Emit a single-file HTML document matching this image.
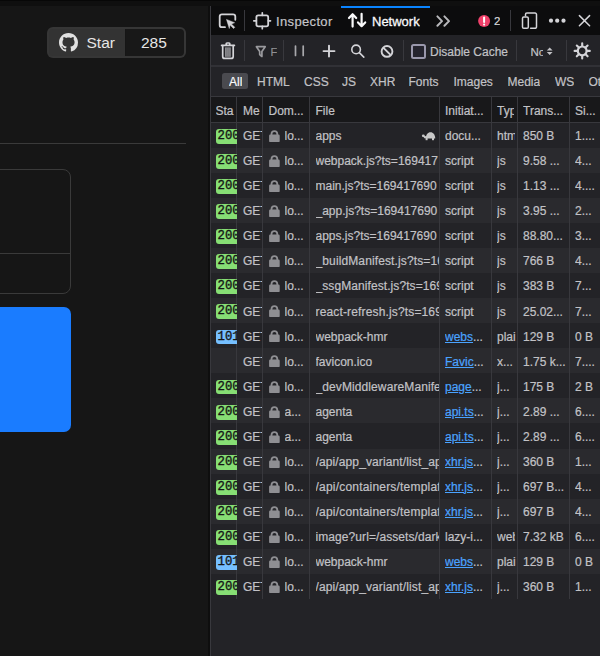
<!DOCTYPE html>
<html><head><meta charset="utf-8">
<style>
*{box-sizing:border-box}
html,body{margin:0;padding:0}
body{width:600px;height:656px;background:#161616;position:relative;overflow:hidden;font-family:"Liberation Sans",sans-serif;color:#c2c2c6}
.a{position:absolute}
svg{position:absolute;overflow:visible}
.sep{position:absolute;width:1px;background:#38383d}
.t{position:absolute;white-space:nowrap;overflow:hidden;font-size:12px;line-height:25px;color:#c2c2c6;-webkit-text-stroke:0.2px currentColor}
.lnk{color:#4aa3ff;text-decoration:underline;text-decoration-thickness:1.2px}
.el{letter-spacing:-0.1px}
.badge{position:absolute;border-radius:3px 0 0 3px;font-family:"Liberation Mono",monospace;font-size:12.3px;color:#151515;padding-left:1.6px;-webkit-text-stroke:0.35px #151515;overflow:hidden;white-space:nowrap}
</style></head><body>

<div class="a" style="left:46.8px;top:26.8px;width:139px;height:31.6px;border-radius:6px;background:#363636;"></div>
<div class="a" style="left:48.8px;top:28.8px;width:76.2px;height:27.6px;border-radius:4px 0 0 4px;background:#333333;"></div>
<div class="a" style="left:125px;top:28.8px;width:1px;height:27.6px;background:#161616;"></div>
<div class="a" style="left:126px;top:28.8px;width:57.8px;height:27.6px;border-radius:0 4px 4px 0;background:#181818;"></div>
<div class="a" style="left:86.5px;top:28px;font-size:15.5px;line-height:29px;color:#e6e6e6">Star</div>
<div class="a" style="left:141px;top:28px;font-size:15.5px;line-height:29px;color:#e6e6e6">285</div>
<svg style="left:59.2px;top:33.2px" width="19" height="19" viewBox="0 0 16 16"><path fill="#e0e0e0" d="M8 0C3.58 0 0 3.58 0 8c0 3.54 2.29 6.53 5.47 7.59.4.07.55-.17.55-.38 0-.19-.01-.82-.01-1.49-2.01.37-2.53-.49-2.69-.94-.09-.23-.48-.94-.82-1.13-.28-.15-.68-.52-.01-.53.63-.01 1.08.58 1.230.82.72 1.21 1.87.87 2.33.66.07-.52.28-.87.51-1.07-1.78-.2-3.64-.89-3.64-3.95 0-.87.31-1.59.82-2.15-.08-.2-.36-1.02.08-2.12 0 0 .67-.21 2.2.82.64-.18 1.32-.27 2-.27.68 0 1.36.09 2 .27 1.53-1.04 2.2-.82 2.2-.82.44 1.1.16 1.92.08 2.12.51.56.82 1.27.82 2.15 0 3.07-1.87 3.75-3.65 3.95.29.25.54.73.54 1.48 0 1.07-.01 1.93-.01 2.2 0 .21.15.46.55.38A8.013 8.013 0 0016 8c0-4.42-3.58-8-8-8z"/></svg>
<div class="a" style="left:0;top:143px;width:186px;height:1px;background:#3a3a3a"></div>
<div class="a" style="left:-10px;top:169px;width:81px;height:125px;border:1px solid #3a3a3a;border-radius:8px"></div>
<div class="a" style="left:0;top:253px;width:70px;height:1px;background:#3a3a3a"></div>
<div class="a" style="left:-10px;top:306.5px;width:81px;height:125.5px;background:#1a7cff;border-radius:7px"></div>

<div class="a" style="left:208px;top:0;width:2px;height:656px;background:#0e0e0e"></div>
<div class="a" style="left:210px;top:0;width:1px;height:656px;background:#38383d"></div>
<div class="a" style="left:211px;top:0;width:389px;height:656px;background:#232327"></div>
<!-- tab bar -->
<div class="a" style="left:211px;top:0;width:389px;height:35px;background:#0c0c0d"></div>
<div class="a" style="left:0;top:0;width:600px;height:5.5px;background:#0f0f0f"></div>
<div class="a" style="left:0;top:0;width:600px;height:1px;background:#070707"></div>
<div class="a" style="left:340.5px;top:6px;width:89px;height:2px;background:#0a84ff"></div>
<div class="sep" style="left:244px;top:10px;height:21px"></div>
<div class="sep" style="left:510px;top:10px;height:21px"></div>
<div class="t" style="left:276px;top:9px;font-size:13px;color:#c4c4c8;letter-spacing:0.35px">Inspector</div>
<div class="t" style="left:372px;top:9px;font-size:13px;color:#f9f9fa;-webkit-text-stroke:0.3px #f9f9fa">Network</div>
<div class="t" style="left:494px;top:9px;font-size:11.5px;color:#d7d7db">2</div>
<svg style="left:0;top:0" width="600" height="66" viewBox="0 0 600 66">
 <g fill="none" stroke="#d4d4d8" stroke-width="1.6" stroke-linecap="round" stroke-linejoin="round">
  <path stroke-width="1.8" d="M235.3 19.8V16.6a2.3 2.3 0 0 0-2.3-2.3H222a2.3 2.3 0 0 0-2.3 2.3V24.9a2.3 2.3 0 0 0 2.3 2.3H225"/>
  <rect stroke-width="1.8" x="256.4" y="15.4" width="11.8" height="10.9" rx="1.8"/>
  <path stroke-width="1.7" d="M262.3 12.8V15.3M262.3 26.3V28.7M253.8 20.8H256.3M268.3 20.8H270.5"/>
 </g>
 <path fill="#d4d4d8" stroke="#d4d4d8" stroke-width="0.5" stroke-linejoin="round" d="M226.5 19.4L234.6 22.7L231.4 23.9L234.8 27.3L233.5 28.5L230.1 25.1L229.3 28.5Z"/>
 <g fill="none" stroke="#f9f9fa" stroke-width="2.2" stroke-linecap="round" stroke-linejoin="round">
  <path d="M352.6 26.6V14.4M349 18L352.6 14.2L356.2 18"/>
  <path d="M361.6 13.8V26M358 22.4L361.6 26.2L365.2 22.4"/>
 </g>
 <g fill="none" stroke="#b8b8bb" stroke-width="2" stroke-linecap="round" stroke-linejoin="round">
  <path d="M437.4 16.4L442 21.1L437.4 25.8M444.4 16.4L449 21.1L444.4 25.8"/>
 </g>
 <circle cx="484.1" cy="21.1" r="6" fill="#f0406a"/>
 <path d="M484.1 17.5V22" stroke="#fff" stroke-width="2" stroke-linecap="round"/>
 <circle cx="484.1" cy="24.6" r="1.05" fill="#fff"/>
 <g fill="none" stroke="#d4d4d8" stroke-width="1.5" stroke-linecap="round" stroke-linejoin="round">
  <rect x="522.5" y="17" width="5.8" height="11.3" rx="1.3"/>
  <path d="M525.5 15.8V14.4a1.4 1.4 0 0 1 1.4-1.4H535.1a1.4 1.4 0 0 1 1.4 1.4V26.9a1.4 1.4 0 0 1-1.4 1.4H530.6"/>
  <path d="M579.4 15.6L589.6 25.8M589.6 15.6L579.4 25.8"/>
 </g>
 <circle cx="551" cy="20.7" r="2.1" fill="#d4d4d8"/>
 <circle cx="557.2" cy="20.7" r="2.1" fill="#d4d4d8"/>
 <circle cx="563.5" cy="20.7" r="2.1" fill="#d4d4d8"/>
</svg>

<!-- toolbar 2 -->
<div class="a" style="left:211px;top:35px;width:389px;height:31px;background:#232327"></div>
<div class="a" style="left:211px;top:65px;width:389px;height:2px;background:#313136"></div>
<div class="sep" style="left:244px;top:40px;height:21px"></div>
<div class="sep" style="left:283px;top:40px;height:21px"></div>
<div class="sep" style="left:403px;top:40px;height:21px"></div>
<div class="sep" style="left:515.5px;top:40px;height:21px"></div>
<div class="sep" style="left:566px;top:40px;height:21px"></div>
<div class="t" style="left:270.5px;top:39.5px;font-size:11px;color:#8f8f93">F</div>
<div class="a" style="left:411px;top:44px;width:15px;height:15px;border:2px solid #9a98ac;border-radius:2.5px;background:#25242e"></div>
<div class="t" style="left:430px;top:40px;font-size:12px;color:#c2c2c6">Disable Cache</div>
<div class="t" style="left:530.5px;top:40px;font-size:11.5px;color:#c2c2c6;width:12.5px">No</div>
<svg style="left:0;top:0" width="600" height="66" viewBox="0 0 600 66">
 <g fill="none" stroke="#d4d4d8" stroke-width="1.7" stroke-linecap="round" stroke-linejoin="round">
  <path d="M221.6 45.4H234.4M226.2 45.2V43.8a0.8 0.8 0 0 1 .8-.8H229a0.8 0.8 0 0 1 .8.8V45.2"/>
  <path d="M222.7 45.6V56.4a2 2 0 0 0 2 2H231.2a2 2 0 0 0 2-2V45.6"/>
 </g>
 <rect x="225" y="47.4" width="5.8" height="9.4" fill="#8a8a8e"/>
 <path d="M226.9 47.6V56.6M228.9 47.6V56.6" stroke="#6a6a6e" stroke-width="0.7"/>
 <path fill="none" stroke="#9a9a9e" stroke-width="1.7" stroke-linejoin="round" d="M256.4 46.7H265.2L261.9 51.4V56.5L259.7 54.6V51.4Z"/>
 <path d="M295.5 46V55.4M303.2 46V55.4" stroke="#a8a8ac" stroke-width="1.7" stroke-linecap="round"/>
 <g fill="none" stroke="#d4d4d8" stroke-width="1.9" stroke-linecap="round">
  <path d="M329 45.6V56.6M323.5 51.1H334.5"/>
 </g>
 <g fill="none" stroke="#d4d4d8" stroke-width="1.6" stroke-linecap="round">
  <circle cx="356.1" cy="49.4" r="4.3"/>
  <path d="M359.3 52.6L363.8 57.1"/>
 </g>
 <g fill="none" stroke="#d4d4d8" stroke-width="1.9">
  <circle cx="387" cy="51.4" r="5.4"/>
  <path d="M383.2 47.6L390.8 55.2"/>
 </g>
 <path fill="#c2c2c6" d="M546.8 50.6L549.7 47.5L552.6 50.6ZM546.8 52L549.7 55.1L552.6 52Z"/>
 <g transform="translate(582.2 50.9)">
  <circle r="4.4" fill="none" stroke="#d4d4d8" stroke-width="2.2"/>
  <g stroke="#d4d4d8" stroke-width="2.1" stroke-linecap="round">
   <path d="M0 -5V-7.6M0 5V7.6M-5 0H-7.6M5 0H7.6M3.6 3.6L5.4 5.4M-3.6 -3.6L-5.4 -5.4M3.6 -3.6L5.4 -5.4M-3.6 3.6L-5.4 5.4"/>
  </g>
 </g>
</svg>

<!-- filter row -->
<div class="a" style="left:211px;top:96px;width:389px;height:1px;background:#38383d"></div>
<div class="a" style="left:222.3px;top:73.3px;width:25.7px;height:16px;border-radius:2.5px;background:#4a4a4f"></div>
<div class="t" style="left:229px;top:70px;color:#f9f9fa">All</div>
<div class="t" style="left:257px;top:70px">HTML</div>
<div class="t" style="left:304px;top:70px">CSS</div>
<div class="t" style="left:342px;top:70px">JS</div>
<div class="t" style="left:370px;top:70px">XHR</div>
<div class="t" style="left:408.5px;top:70px">Fonts</div>
<div class="t" style="left:453.5px;top:70px">Images</div>
<div class="t" style="left:507.5px;top:70px">Media</div>
<div class="t" style="left:555px;top:70px">WS</div>
<div class="t" style="left:588.5px;top:70px">Other</div>

<!-- header -->
<div class="a" style="left:211px;top:97px;width:389px;height:25px;background:#18181a"></div>
<div class="a" style="left:211px;top:122px;width:389px;height:1px;background:#38383d"></div>
<div class="a" style="left:211px;top:122.50px;width:389px;height:25.08px;background:#232327"></div>
<div class="a" style="left:211px;top:147.58px;width:389px;height:25.08px;background:#2a2a2e"></div>
<div class="a" style="left:211px;top:172.66px;width:389px;height:25.08px;background:#232327"></div>
<div class="a" style="left:211px;top:197.74px;width:389px;height:25.08px;background:#2a2a2e"></div>
<div class="a" style="left:211px;top:222.82px;width:389px;height:25.08px;background:#232327"></div>
<div class="a" style="left:211px;top:247.90px;width:389px;height:25.08px;background:#2a2a2e"></div>
<div class="a" style="left:211px;top:272.98px;width:389px;height:25.08px;background:#232327"></div>
<div class="a" style="left:211px;top:298.06px;width:389px;height:25.08px;background:#2a2a2e"></div>
<div class="a" style="left:211px;top:323.14px;width:389px;height:25.08px;background:#232327"></div>
<div class="a" style="left:211px;top:348.22px;width:389px;height:25.08px;background:#2a2a2e"></div>
<div class="a" style="left:211px;top:373.30px;width:389px;height:25.08px;background:#232327"></div>
<div class="a" style="left:211px;top:398.38px;width:389px;height:25.08px;background:#2a2a2e"></div>
<div class="a" style="left:211px;top:423.46px;width:389px;height:25.08px;background:#232327"></div>
<div class="a" style="left:211px;top:448.54px;width:389px;height:25.08px;background:#2a2a2e"></div>
<div class="a" style="left:211px;top:473.62px;width:389px;height:25.08px;background:#232327"></div>
<div class="a" style="left:211px;top:498.70px;width:389px;height:25.08px;background:#2a2a2e"></div>
<div class="a" style="left:211px;top:523.78px;width:389px;height:25.08px;background:#232327"></div>
<div class="a" style="left:211px;top:548.86px;width:389px;height:25.08px;background:#2a2a2e"></div>
<div class="a" style="left:211px;top:573.94px;width:389px;height:25.08px;background:#232327"></div>
<div class="sep" style="left:236.0px;top:97px;height:502.0px"></div>
<div class="sep" style="left:262.0px;top:97px;height:502.0px"></div>
<div class="sep" style="left:309.0px;top:97px;height:502.0px"></div>
<div class="sep" style="left:439.0px;top:97px;height:502.0px"></div>
<div class="sep" style="left:490.5px;top:97px;height:502.0px"></div>
<div class="sep" style="left:516.8px;top:97px;height:502.0px"></div>
<div class="sep" style="left:569.0px;top:97px;height:502.0px"></div>
<div class="badge" style="left:216px;top:128.90px;width:20.5px;height:14.8px;line-height:14.8px;background:#86de74">200</div>
<div class="t" style="left:243px;top:124.00px;width:19px">GET</div>
<svg style="left:268.7px;top:129.70px" width="11" height="13" viewBox="0 0 11 13"><path fill="#8f8f93" d="M1.3 12.1a1.2 1.2 0 0 1-1.2-1.2V5.8a1.2 1.2 0 0 1 1.2-1.2h.3V4.1a3.8 3.8 0 0 1 7.6 0v.5h.3a1.2 1.2 0 0 1 1.2 1.2v5.1a1.2 1.2 0 0 1-1.2 1.2zM3.4 4.6h4V4.1a2 2 0 0 0-4 0z"/></svg>
<div class="t" style="left:284.5px;top:124.00px;width:24px">lo<span class="el">...</span></div>
<div class="t" style="left:315.5px;top:124.00px;width:123.5px;letter-spacing:0px">apps</div>
<svg style="left:420px;top:132.00px" width="18" height="12" viewBox="0 0 18 12"><g fill="#c8c8c8"><path d="M5.8 6.4C5.8 2.6 7.8 0.2 10.5 0.2S15.2 2.6 15.2 6.4Z"/><circle cx="3.3" cy="3.8" r="1.4"/><path d="M3.2 3.2L6.5 4.6V6.3H4.2Z"/><rect x="5.6" y="5.8" width="2" height="2.4"/><rect x="12" y="5.8" width="2" height="2.4"/></g></svg>
<div class="t" style="left:445px;top:124.00px;width:45px">docu<span class="el">...</span></div>
<div class="t" style="left:497px;top:124.00px;width:18px">htm</div>
<div class="t" style="left:523px;top:124.00px;width:46px">850 B</div>
<div class="t" style="left:575px;top:124.00px;width:25px">1.<span class="el">...</span></div>
<div class="badge" style="left:216px;top:153.98px;width:20.5px;height:14.8px;line-height:14.8px;background:#86de74">200</div>
<div class="t" style="left:243px;top:149.08px;width:19px">GET</div>
<svg style="left:268.7px;top:154.78px" width="11" height="13" viewBox="0 0 11 13"><path fill="#8f8f93" d="M1.3 12.1a1.2 1.2 0 0 1-1.2-1.2V5.8a1.2 1.2 0 0 1 1.2-1.2h.3V4.1a3.8 3.8 0 0 1 7.6 0v.5h.3a1.2 1.2 0 0 1 1.2 1.2v5.1a1.2 1.2 0 0 1-1.2 1.2zM3.4 4.6h4V4.1a2 2 0 0 0-4 0z"/></svg>
<div class="t" style="left:284.5px;top:149.08px;width:24px">lo<span class="el">...</span></div>
<div class="t" style="left:315.5px;top:149.08px;width:123.5px;letter-spacing:0px">webpack.js?ts=169417</div>
<div class="t" style="left:445px;top:149.08px;width:45px">script</div>
<div class="t" style="left:497px;top:149.08px;width:19px">js</div>
<div class="t" style="left:523px;top:149.08px;width:46px">9.58 <span class="el">...</span></div>
<div class="t" style="left:575px;top:149.08px;width:25px">4<span class="el">...</span></div>
<div class="badge" style="left:216px;top:179.06px;width:20.5px;height:14.8px;line-height:14.8px;background:#86de74">200</div>
<div class="t" style="left:243px;top:174.16px;width:19px">GET</div>
<svg style="left:268.7px;top:179.86px" width="11" height="13" viewBox="0 0 11 13"><path fill="#8f8f93" d="M1.3 12.1a1.2 1.2 0 0 1-1.2-1.2V5.8a1.2 1.2 0 0 1 1.2-1.2h.3V4.1a3.8 3.8 0 0 1 7.6 0v.5h.3a1.2 1.2 0 0 1 1.2 1.2v5.1a1.2 1.2 0 0 1-1.2 1.2zM3.4 4.6h4V4.1a2 2 0 0 0-4 0z"/></svg>
<div class="t" style="left:284.5px;top:174.16px;width:24px">lo<span class="el">...</span></div>
<div class="t" style="left:315.5px;top:174.16px;width:123.5px;letter-spacing:0px">main.js?ts=169417690</div>
<div class="t" style="left:445px;top:174.16px;width:45px">script</div>
<div class="t" style="left:497px;top:174.16px;width:19px">js</div>
<div class="t" style="left:523px;top:174.16px;width:46px">1.13 <span class="el">...</span></div>
<div class="t" style="left:575px;top:174.16px;width:25px">4.<span class="el">...</span></div>
<div class="badge" style="left:216px;top:204.14px;width:20.5px;height:14.8px;line-height:14.8px;background:#86de74">200</div>
<div class="t" style="left:243px;top:199.24px;width:19px">GET</div>
<svg style="left:268.7px;top:204.94px" width="11" height="13" viewBox="0 0 11 13"><path fill="#8f8f93" d="M1.3 12.1a1.2 1.2 0 0 1-1.2-1.2V5.8a1.2 1.2 0 0 1 1.2-1.2h.3V4.1a3.8 3.8 0 0 1 7.6 0v.5h.3a1.2 1.2 0 0 1 1.2 1.2v5.1a1.2 1.2 0 0 1-1.2 1.2zM3.4 4.6h4V4.1a2 2 0 0 0-4 0z"/></svg>
<div class="t" style="left:284.5px;top:199.24px;width:24px">lo<span class="el">...</span></div>
<div class="t" style="left:315.5px;top:199.24px;width:123.5px;letter-spacing:0px">_app.js?ts=169417690</div>
<div class="t" style="left:445px;top:199.24px;width:45px">script</div>
<div class="t" style="left:497px;top:199.24px;width:19px">js</div>
<div class="t" style="left:523px;top:199.24px;width:46px">3.95 <span class="el">...</span></div>
<div class="t" style="left:575px;top:199.24px;width:25px">2<span class="el">...</span></div>
<div class="badge" style="left:216px;top:229.22px;width:20.5px;height:14.8px;line-height:14.8px;background:#86de74">200</div>
<div class="t" style="left:243px;top:224.32px;width:19px">GET</div>
<svg style="left:268.7px;top:230.02px" width="11" height="13" viewBox="0 0 11 13"><path fill="#8f8f93" d="M1.3 12.1a1.2 1.2 0 0 1-1.2-1.2V5.8a1.2 1.2 0 0 1 1.2-1.2h.3V4.1a3.8 3.8 0 0 1 7.6 0v.5h.3a1.2 1.2 0 0 1 1.2 1.2v5.1a1.2 1.2 0 0 1-1.2 1.2zM3.4 4.6h4V4.1a2 2 0 0 0-4 0z"/></svg>
<div class="t" style="left:284.5px;top:224.32px;width:24px">lo<span class="el">...</span></div>
<div class="t" style="left:315.5px;top:224.32px;width:123.5px;letter-spacing:0px">apps.js?ts=169417690</div>
<div class="t" style="left:445px;top:224.32px;width:45px">script</div>
<div class="t" style="left:497px;top:224.32px;width:19px">js</div>
<div class="t" style="left:523px;top:224.32px;width:46px">88.80<span class="el">...</span></div>
<div class="t" style="left:575px;top:224.32px;width:25px">3<span class="el">...</span></div>
<div class="badge" style="left:216px;top:254.30px;width:20.5px;height:14.8px;line-height:14.8px;background:#86de74">200</div>
<div class="t" style="left:243px;top:249.40px;width:19px">GET</div>
<svg style="left:268.7px;top:255.10px" width="11" height="13" viewBox="0 0 11 13"><path fill="#8f8f93" d="M1.3 12.1a1.2 1.2 0 0 1-1.2-1.2V5.8a1.2 1.2 0 0 1 1.2-1.2h.3V4.1a3.8 3.8 0 0 1 7.6 0v.5h.3a1.2 1.2 0 0 1 1.2 1.2v5.1a1.2 1.2 0 0 1-1.2 1.2zM3.4 4.6h4V4.1a2 2 0 0 0-4 0z"/></svg>
<div class="t" style="left:284.5px;top:249.40px;width:24px">lo<span class="el">...</span></div>
<div class="t" style="left:315.5px;top:249.40px;width:123.5px;letter-spacing:0.12px">_buildManifest.js?ts=169</div>
<div class="t" style="left:445px;top:249.40px;width:45px">script</div>
<div class="t" style="left:497px;top:249.40px;width:19px">js</div>
<div class="t" style="left:523px;top:249.40px;width:46px">766 B</div>
<div class="t" style="left:575px;top:249.40px;width:25px">4<span class="el">...</span></div>
<div class="badge" style="left:216px;top:279.38px;width:20.5px;height:14.8px;line-height:14.8px;background:#86de74">200</div>
<div class="t" style="left:243px;top:274.48px;width:19px">GET</div>
<svg style="left:268.7px;top:280.18px" width="11" height="13" viewBox="0 0 11 13"><path fill="#8f8f93" d="M1.3 12.1a1.2 1.2 0 0 1-1.2-1.2V5.8a1.2 1.2 0 0 1 1.2-1.2h.3V4.1a3.8 3.8 0 0 1 7.6 0v.5h.3a1.2 1.2 0 0 1 1.2 1.2v5.1a1.2 1.2 0 0 1-1.2 1.2zM3.4 4.6h4V4.1a2 2 0 0 0-4 0z"/></svg>
<div class="t" style="left:284.5px;top:274.48px;width:24px">lo<span class="el">...</span></div>
<div class="t" style="left:315.5px;top:274.48px;width:123.5px;letter-spacing:0.08px">_ssgManifest.js?ts=169</div>
<div class="t" style="left:445px;top:274.48px;width:45px">script</div>
<div class="t" style="left:497px;top:274.48px;width:19px">js</div>
<div class="t" style="left:523px;top:274.48px;width:46px">383 B</div>
<div class="t" style="left:575px;top:274.48px;width:25px">7<span class="el">...</span></div>
<div class="badge" style="left:216px;top:304.46px;width:20.5px;height:14.8px;line-height:14.8px;background:#86de74">200</div>
<div class="t" style="left:243px;top:299.56px;width:19px">GET</div>
<svg style="left:268.7px;top:305.26px" width="11" height="13" viewBox="0 0 11 13"><path fill="#8f8f93" d="M1.3 12.1a1.2 1.2 0 0 1-1.2-1.2V5.8a1.2 1.2 0 0 1 1.2-1.2h.3V4.1a3.8 3.8 0 0 1 7.6 0v.5h.3a1.2 1.2 0 0 1 1.2 1.2v5.1a1.2 1.2 0 0 1-1.2 1.2zM3.4 4.6h4V4.1a2 2 0 0 0-4 0z"/></svg>
<div class="t" style="left:284.5px;top:299.56px;width:24px">lo<span class="el">...</span></div>
<div class="t" style="left:315.5px;top:299.56px;width:123.5px;letter-spacing:0.15px">react-refresh.js?ts=169</div>
<div class="t" style="left:445px;top:299.56px;width:45px">script</div>
<div class="t" style="left:497px;top:299.56px;width:19px">js</div>
<div class="t" style="left:523px;top:299.56px;width:46px">25.02<span class="el">...</span></div>
<div class="t" style="left:575px;top:299.56px;width:25px">7<span class="el">...</span></div>
<div class="badge" style="left:216px;top:329.54px;width:20.5px;height:14.8px;line-height:14.8px;background:#75bfff">101</div>
<div class="t" style="left:243px;top:324.64px;width:19px">GET</div>
<svg style="left:268.7px;top:330.34px" width="11" height="13" viewBox="0 0 11 13"><path fill="#8f8f93" d="M1.3 12.1a1.2 1.2 0 0 1-1.2-1.2V5.8a1.2 1.2 0 0 1 1.2-1.2h.3V4.1a3.8 3.8 0 0 1 7.6 0v.5h.3a1.2 1.2 0 0 1 1.2 1.2v5.1a1.2 1.2 0 0 1-1.2 1.2zM3.4 4.6h4V4.1a2 2 0 0 0-4 0z"/></svg>
<div class="t" style="left:284.5px;top:324.64px;width:24px">lo<span class="el">...</span></div>
<div class="t" style="left:315.5px;top:324.64px;width:123.5px;letter-spacing:0px">webpack-hmr</div>
<div class="t" style="left:445px;top:324.64px;width:45px"><span class="lnk">webs</span><span class="el">...</span></div>
<div class="t" style="left:497px;top:324.64px;width:19px">plai</div>
<div class="t" style="left:523px;top:324.64px;width:46px">129 B</div>
<div class="t" style="left:575px;top:324.64px;width:25px">0 B</div>
<div class="t" style="left:243px;top:349.72px;width:19px">GET</div>
<svg style="left:268.7px;top:355.42px" width="11" height="13" viewBox="0 0 11 13"><path fill="#8f8f93" d="M1.3 12.1a1.2 1.2 0 0 1-1.2-1.2V5.8a1.2 1.2 0 0 1 1.2-1.2h.3V4.1a3.8 3.8 0 0 1 7.6 0v.5h.3a1.2 1.2 0 0 1 1.2 1.2v5.1a1.2 1.2 0 0 1-1.2 1.2zM3.4 4.6h4V4.1a2 2 0 0 0-4 0z"/></svg>
<div class="t" style="left:284.5px;top:349.72px;width:24px">lo<span class="el">...</span></div>
<div class="t" style="left:315.5px;top:349.72px;width:123.5px;letter-spacing:0px">favicon.ico</div>
<div class="t" style="left:445px;top:349.72px;width:45px"><span class="lnk">Favic</span><span class="el">...</span></div>
<div class="t" style="left:497px;top:349.72px;width:19px">x<span class="el">...</span></div>
<div class="t" style="left:523px;top:349.72px;width:46px">1.75 k<span class="el">...</span></div>
<div class="t" style="left:575px;top:349.72px;width:25px">7.<span class="el">...</span></div>
<div class="badge" style="left:216px;top:379.70px;width:20.5px;height:14.8px;line-height:14.8px;background:#86de74">200</div>
<div class="t" style="left:243px;top:374.80px;width:19px">GET</div>
<svg style="left:268.7px;top:380.50px" width="11" height="13" viewBox="0 0 11 13"><path fill="#8f8f93" d="M1.3 12.1a1.2 1.2 0 0 1-1.2-1.2V5.8a1.2 1.2 0 0 1 1.2-1.2h.3V4.1a3.8 3.8 0 0 1 7.6 0v.5h.3a1.2 1.2 0 0 1 1.2 1.2v5.1a1.2 1.2 0 0 1-1.2 1.2zM3.4 4.6h4V4.1a2 2 0 0 0-4 0z"/></svg>
<div class="t" style="left:284.5px;top:374.80px;width:24px">lo<span class="el">...</span></div>
<div class="t" style="left:315.5px;top:374.80px;width:123.5px;letter-spacing:0.1px">_devMiddlewareManifest</div>
<div class="t" style="left:445px;top:374.80px;width:45px"><span class="lnk">page</span><span class="el">...</span></div>
<div class="t" style="left:497px;top:374.80px;width:19px">j<span class="el">...</span></div>
<div class="t" style="left:523px;top:374.80px;width:46px">175 B</div>
<div class="t" style="left:575px;top:374.80px;width:25px">2 B</div>
<div class="badge" style="left:216px;top:404.78px;width:20.5px;height:14.8px;line-height:14.8px;background:#86de74">200</div>
<div class="t" style="left:243px;top:399.88px;width:19px">GET</div>
<svg style="left:268.7px;top:405.58px" width="11" height="13" viewBox="0 0 11 13"><path fill="#8f8f93" d="M1.3 12.1a1.2 1.2 0 0 1-1.2-1.2V5.8a1.2 1.2 0 0 1 1.2-1.2h.3V4.1a3.8 3.8 0 0 1 7.6 0v.5h.3a1.2 1.2 0 0 1 1.2 1.2v5.1a1.2 1.2 0 0 1-1.2 1.2zM3.4 4.6h4V4.1a2 2 0 0 0-4 0z"/></svg>
<div class="t" style="left:284.5px;top:399.88px;width:24px">a<span class="el">...</span></div>
<div class="t" style="left:315.5px;top:399.88px;width:123.5px;letter-spacing:0px">agenta</div>
<div class="t" style="left:445px;top:399.88px;width:45px"><span class="lnk">api.ts</span><span class="el">...</span></div>
<div class="t" style="left:497px;top:399.88px;width:19px">j<span class="el">...</span></div>
<div class="t" style="left:523px;top:399.88px;width:46px">2.89 <span class="el">...</span></div>
<div class="t" style="left:575px;top:399.88px;width:25px">6.<span class="el">...</span></div>
<div class="badge" style="left:216px;top:429.86px;width:20.5px;height:14.8px;line-height:14.8px;background:#86de74">200</div>
<div class="t" style="left:243px;top:424.96px;width:19px">GET</div>
<svg style="left:268.7px;top:430.66px" width="11" height="13" viewBox="0 0 11 13"><path fill="#8f8f93" d="M1.3 12.1a1.2 1.2 0 0 1-1.2-1.2V5.8a1.2 1.2 0 0 1 1.2-1.2h.3V4.1a3.8 3.8 0 0 1 7.6 0v.5h.3a1.2 1.2 0 0 1 1.2 1.2v5.1a1.2 1.2 0 0 1-1.2 1.2zM3.4 4.6h4V4.1a2 2 0 0 0-4 0z"/></svg>
<div class="t" style="left:284.5px;top:424.96px;width:24px">a<span class="el">...</span></div>
<div class="t" style="left:315.5px;top:424.96px;width:123.5px;letter-spacing:0px">agenta</div>
<div class="t" style="left:445px;top:424.96px;width:45px"><span class="lnk">api.ts</span><span class="el">...</span></div>
<div class="t" style="left:497px;top:424.96px;width:19px">j<span class="el">...</span></div>
<div class="t" style="left:523px;top:424.96px;width:46px">2.89 <span class="el">...</span></div>
<div class="t" style="left:575px;top:424.96px;width:25px">6.<span class="el">...</span></div>
<div class="badge" style="left:216px;top:454.94px;width:20.5px;height:14.8px;line-height:14.8px;background:#86de74">200</div>
<div class="t" style="left:243px;top:450.04px;width:19px">GET</div>
<svg style="left:268.7px;top:455.74px" width="11" height="13" viewBox="0 0 11 13"><path fill="#8f8f93" d="M1.3 12.1a1.2 1.2 0 0 1-1.2-1.2V5.8a1.2 1.2 0 0 1 1.2-1.2h.3V4.1a3.8 3.8 0 0 1 7.6 0v.5h.3a1.2 1.2 0 0 1 1.2 1.2v5.1a1.2 1.2 0 0 1-1.2 1.2zM3.4 4.6h4V4.1a2 2 0 0 0-4 0z"/></svg>
<div class="t" style="left:284.5px;top:450.04px;width:24px">lo<span class="el">...</span></div>
<div class="t" style="left:315.5px;top:450.04px;width:123.5px;letter-spacing:0.12px">/api/app_variant/list_app</div>
<div class="t" style="left:445px;top:450.04px;width:45px"><span class="lnk">xhr.js</span><span class="el">...</span></div>
<div class="t" style="left:497px;top:450.04px;width:19px">j<span class="el">...</span></div>
<div class="t" style="left:523px;top:450.04px;width:46px">360 B</div>
<div class="t" style="left:575px;top:450.04px;width:25px">1<span class="el">...</span></div>
<div class="badge" style="left:216px;top:480.02px;width:20.5px;height:14.8px;line-height:14.8px;background:#86de74">200</div>
<div class="t" style="left:243px;top:475.12px;width:19px">GET</div>
<svg style="left:268.7px;top:480.82px" width="11" height="13" viewBox="0 0 11 13"><path fill="#8f8f93" d="M1.3 12.1a1.2 1.2 0 0 1-1.2-1.2V5.8a1.2 1.2 0 0 1 1.2-1.2h.3V4.1a3.8 3.8 0 0 1 7.6 0v.5h.3a1.2 1.2 0 0 1 1.2 1.2v5.1a1.2 1.2 0 0 1-1.2 1.2zM3.4 4.6h4V4.1a2 2 0 0 0-4 0z"/></svg>
<div class="t" style="left:284.5px;top:475.12px;width:24px">lo<span class="el">...</span></div>
<div class="t" style="left:315.5px;top:475.12px;width:123.5px;letter-spacing:0.2px">/api/containers/templat</div>
<div class="t" style="left:445px;top:475.12px;width:45px"><span class="lnk">xhr.js</span><span class="el">...</span></div>
<div class="t" style="left:497px;top:475.12px;width:19px">j<span class="el">...</span></div>
<div class="t" style="left:523px;top:475.12px;width:46px">697 B<span class="el">...</span></div>
<div class="t" style="left:575px;top:475.12px;width:25px">4<span class="el">...</span></div>
<div class="badge" style="left:216px;top:505.10px;width:20.5px;height:14.8px;line-height:14.8px;background:#86de74">200</div>
<div class="t" style="left:243px;top:500.20px;width:19px">GET</div>
<svg style="left:268.7px;top:505.90px" width="11" height="13" viewBox="0 0 11 13"><path fill="#8f8f93" d="M1.3 12.1a1.2 1.2 0 0 1-1.2-1.2V5.8a1.2 1.2 0 0 1 1.2-1.2h.3V4.1a3.8 3.8 0 0 1 7.6 0v.5h.3a1.2 1.2 0 0 1 1.2 1.2v5.1a1.2 1.2 0 0 1-1.2 1.2zM3.4 4.6h4V4.1a2 2 0 0 0-4 0z"/></svg>
<div class="t" style="left:284.5px;top:500.20px;width:24px">lo<span class="el">...</span></div>
<div class="t" style="left:315.5px;top:500.20px;width:123.5px;letter-spacing:0.2px">/api/containers/templat</div>
<div class="t" style="left:445px;top:500.20px;width:45px"><span class="lnk">xhr.js</span><span class="el">...</span></div>
<div class="t" style="left:497px;top:500.20px;width:19px">j<span class="el">...</span></div>
<div class="t" style="left:523px;top:500.20px;width:46px">697 B</div>
<div class="t" style="left:575px;top:500.20px;width:25px">4<span class="el">...</span></div>
<div class="badge" style="left:216px;top:530.18px;width:20.5px;height:14.8px;line-height:14.8px;background:#86de74">200</div>
<div class="t" style="left:243px;top:525.28px;width:19px">GET</div>
<svg style="left:268.7px;top:530.98px" width="11" height="13" viewBox="0 0 11 13"><path fill="#8f8f93" d="M1.3 12.1a1.2 1.2 0 0 1-1.2-1.2V5.8a1.2 1.2 0 0 1 1.2-1.2h.3V4.1a3.8 3.8 0 0 1 7.6 0v.5h.3a1.2 1.2 0 0 1 1.2 1.2v5.1a1.2 1.2 0 0 1-1.2 1.2zM3.4 4.6h4V4.1a2 2 0 0 0-4 0z"/></svg>
<div class="t" style="left:284.5px;top:525.28px;width:24px">lo<span class="el">...</span></div>
<div class="t" style="left:315.5px;top:525.28px;width:123.5px;letter-spacing:0.08px">image?url=/assets/dark</div>
<div class="t" style="left:445px;top:525.28px;width:45px">lazy-i<span class="el">...</span></div>
<div class="t" style="left:497px;top:525.28px;width:18px">web</div>
<div class="t" style="left:523px;top:525.28px;width:46px">7.32 kB</div>
<div class="t" style="left:575px;top:525.28px;width:25px">6.<span class="el">...</span></div>
<div class="badge" style="left:216px;top:555.26px;width:20.5px;height:14.8px;line-height:14.8px;background:#75bfff">101</div>
<div class="t" style="left:243px;top:550.36px;width:19px">GET</div>
<svg style="left:268.7px;top:556.06px" width="11" height="13" viewBox="0 0 11 13"><path fill="#8f8f93" d="M1.3 12.1a1.2 1.2 0 0 1-1.2-1.2V5.8a1.2 1.2 0 0 1 1.2-1.2h.3V4.1a3.8 3.8 0 0 1 7.6 0v.5h.3a1.2 1.2 0 0 1 1.2 1.2v5.1a1.2 1.2 0 0 1-1.2 1.2zM3.4 4.6h4V4.1a2 2 0 0 0-4 0z"/></svg>
<div class="t" style="left:284.5px;top:550.36px;width:24px">lo<span class="el">...</span></div>
<div class="t" style="left:315.5px;top:550.36px;width:123.5px;letter-spacing:0px">webpack-hmr</div>
<div class="t" style="left:445px;top:550.36px;width:45px"><span class="lnk">webs</span><span class="el">...</span></div>
<div class="t" style="left:497px;top:550.36px;width:19px">plai</div>
<div class="t" style="left:523px;top:550.36px;width:46px">129 B</div>
<div class="t" style="left:575px;top:550.36px;width:25px">0 B</div>
<div class="badge" style="left:216px;top:580.34px;width:20.5px;height:14.8px;line-height:14.8px;background:#86de74">200</div>
<div class="t" style="left:243px;top:575.44px;width:19px">GET</div>
<svg style="left:268.7px;top:581.14px" width="11" height="13" viewBox="0 0 11 13"><path fill="#8f8f93" d="M1.3 12.1a1.2 1.2 0 0 1-1.2-1.2V5.8a1.2 1.2 0 0 1 1.2-1.2h.3V4.1a3.8 3.8 0 0 1 7.6 0v.5h.3a1.2 1.2 0 0 1 1.2 1.2v5.1a1.2 1.2 0 0 1-1.2 1.2zM3.4 4.6h4V4.1a2 2 0 0 0-4 0z"/></svg>
<div class="t" style="left:284.5px;top:575.44px;width:24px">lo<span class="el">...</span></div>
<div class="t" style="left:315.5px;top:575.44px;width:123.5px;letter-spacing:0.12px">/api/app_variant/list_app</div>
<div class="t" style="left:445px;top:575.44px;width:45px"><span class="lnk">xhr.js</span><span class="el">...</span></div>
<div class="t" style="left:497px;top:575.44px;width:19px">j<span class="el">...</span></div>
<div class="t" style="left:523px;top:575.44px;width:46px">360 B</div>
<div class="t" style="left:575px;top:575.44px;width:25px">1<span class="el">...</span></div>
<div class="t" style="left:215.5px;top:99px;width:20.5px">Sta</div>
<div class="t" style="left:243px;top:99px;width:19px">Me</div>
<div class="t" style="left:268.5px;top:99px;width:40px">Dom<span class="el">...</span></div>
<div class="t" style="left:315.5px;top:99px;width:100px">File</div>
<div class="t" style="left:445px;top:99px;width:45px">Initiat<span class="el">...</span></div>
<div class="t" style="left:497px;top:99px;width:16.5px">Type</div>
<div class="t" style="left:523px;top:99px;width:45px">Trans<span class="el">...</span></div>
<div class="t" style="left:575px;top:99px;width:25px">Si<span class="el">...</span></div>
</body></html>
